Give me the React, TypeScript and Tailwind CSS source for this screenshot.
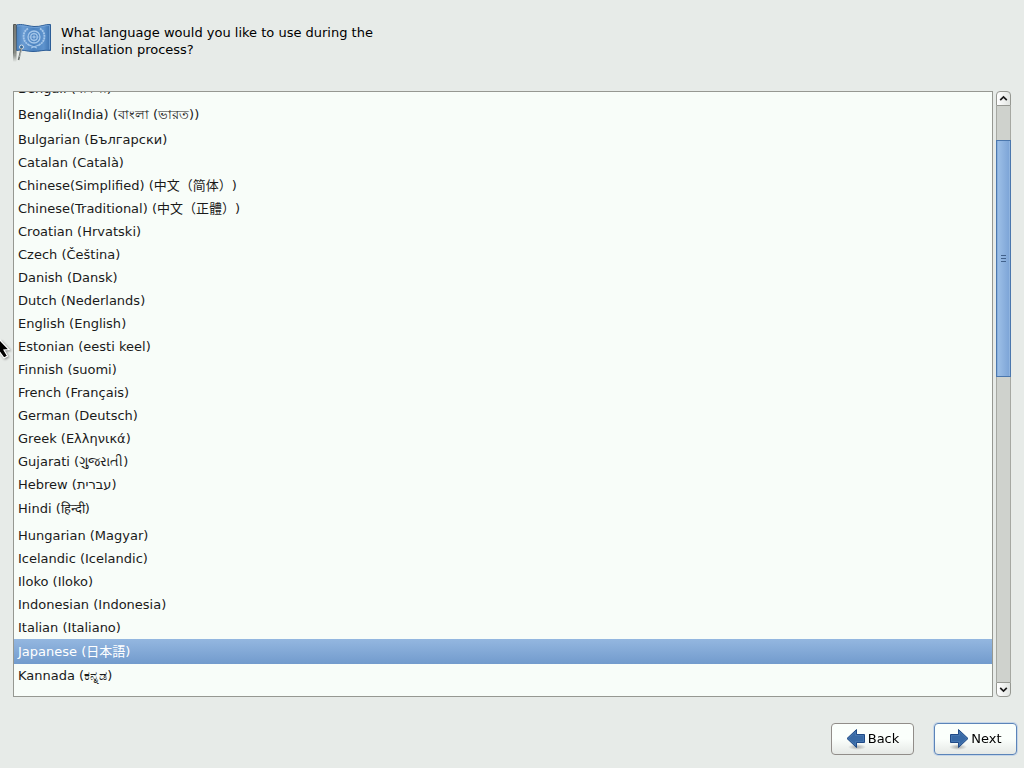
import { useLayoutEffect, useRef, useState } from "react";

type Language = { name: string; native: string; row?: string };

const languages: Language[] = [
  { name: "Bengali", native: "বাংলা", row: "h-[27px] pt-[3px]" },
  { name: "Bengali(India)", native: "বাংলা (ভারত)", row: "h-[27px]" },
  { name: "Bulgarian", native: "Български" },
  { name: "Catalan", native: "Català" },
  { name: "Chinese(Simplified)", native: "中文（简体）" },
  { name: "Chinese(Traditional)", native: "中文（正體）" },
  { name: "Croatian", native: "Hrvatski" },
  { name: "Czech", native: "Čeština" },
  { name: "Danish", native: "Dansk" },
  { name: "Dutch", native: "Nederlands" },
  { name: "English", native: "English" },
  { name: "Estonian", native: "eesti keel" },
  { name: "Finnish", native: "suomi" },
  { name: "French", native: "Français" },
  { name: "German", native: "Deutsch" },
  { name: "Greek", native: "Ελληνικά" },
  { name: "Gujarati", native: "ગુજરાતી" },
  { name: "Hebrew", native: "עברית", row: "h-6" },
  { name: "Hindi", native: "हिन्दी", row: "h-[27px] pb-[3px]" },
  { name: "Hungarian", native: "Magyar" },
  { name: "Icelandic", native: "Icelandic" },
  { name: "Iloko", native: "Iloko" },
  { name: "Indonesian", native: "Indonesia" },
  { name: "Italian", native: "Italiano" },
  { name: "Japanese", native: "日本語", row: "h-[25px]" },
  { name: "Kannada", native: "ಕನ್ನಡ", row: "h-8 pb-2" },
];

function FlagIcon() {
  return (
    <svg width="40" height="40" viewBox="0 0 40 40" aria-hidden="true" className="shrink-0">
      <defs>
        <linearGradient id="flag" x1="0" y1="0" x2="1" y2="0">
          <stop offset="0" stopColor="#4a80bb" />
          <stop offset=".2" stopColor="#6a9cd3" />
          <stop offset=".5" stopColor="#4c83c0" />
          <stop offset=".8" stopColor="#5e93cd" />
          <stop offset="1" stopColor="#3c72b0" />
        </linearGradient>
        <linearGradient id="pole" x1="0" y1="0" x2="0" y2="1">
          <stop offset="0" stopColor="#555753" />
          <stop offset=".75" stopColor="#70746f" />
          <stop offset="1" stopColor="#70746f" stopOpacity="0" />
        </linearGradient>
      </defs>
      <path d="M4.500 3C10 1.500 15 4 22 4.500S33 2 38.500 2.500V28.500C32 27.500 28 29.500 21 29.500S10 27 4.500 28.500Z" fill="url(#flag)" stroke="#2c5d97" />
      <path d="M5 4C10 3 15 5 22 5.500S33 3 37.500 3.500V27.500" fill="none" stroke="#7eabdc" strokeWidth=".7" />
      <g fill="none" stroke="#a5c7ea">
        <circle cx="22" cy="15" r="6" strokeWidth="1.300" />
        <circle cx="22" cy="15" r="3.300" strokeWidth="1.300" />
        <circle cx="22" cy="15" r="1" />
        <path d="M22 9v12M16 15h12" strokeWidth=".5" />
        <path d="M16 6.500C10 10 9.500 20 18 23.500M28 6.500C34 10 34.500 20 26 23.500" strokeWidth="1.800" strokeDasharray="2 .6" />
        <path d="M17 23l8 3M27 23l-8 3" strokeWidth="1.200" />
      </g>
      <rect x="1" y="2" width="3.500" height="38" rx="1" fill="url(#pole)" />
      <path d="M3 3v30" stroke="#a9aca5" strokeWidth=".8" />
      <circle cx="9.500" cy="25" r="2" fill="#376b9f" stroke="#d6e0e8" />
      <path d="M9.500 26L6.500 38" stroke="#686d69" strokeWidth="1.500" />
      <path d="M10 26L7.500 35" stroke="#e8edef" strokeWidth=".5" />
    </svg>
  );
}

function ArrowIcon({ direction }: { direction: "left" | "right" }) {
  return (
    <svg width="20" height="22" viewBox="0 0 20 22" aria-hidden="true" className={direction === "right" ? "shrink-0 -scale-x-100" : "shrink-0"}>
      <defs>
        <radialGradient id={`shadow-${direction}`}>
          <stop offset="0" stopColor="#000" stopOpacity=".3" />
          <stop offset="1" stopColor="#000" stopOpacity="0" />
        </radialGradient>
      </defs>
      <ellipse cx="11" cy="19" rx="9" ry="3" fill={`url(#shadow-${direction})`} />
      <path d="M1 10.500L10.500 1.500V6.500H18.500V14.500H10.500V19.500Z" fill="#3869a5" stroke="#204a87" strokeLinejoin="round" />
      <path d="M2.500 10.500L9.500 3.800V7.500H17.500V13.500H9.500V17.200Z" fill="none" stroke="#4d7eb5" strokeWidth=".6" />
    </svg>
  );
}

function Chevron({ up = false }: { up?: boolean }) {
  return (
    <svg width="9" height="7" viewBox="0 0 9 7" aria-hidden="true" className={up ? "shrink-0" : "shrink-0 rotate-180"}>
      <path d="M1.200 5.200L4.500 2L7.800 5.200" fill="none" stroke="#1b1b1b" strokeWidth="1.700" />
    </svg>
  );
}

function Pointer() {
  return (
    <svg width="12" height="24" viewBox="0 0 12 24" aria-hidden="true" className="pointer-events-none absolute left-0 top-[336px] drop-shadow-[1px_1px_1px_#0006]">
      <path d="M-4 0L9 13.500L4 14L7.500 20L4 22L0 16.500L-4 19Z" fill="#000" stroke="#fff" strokeWidth="1.200" />
    </svg>
  );
}

export default function App() {
  const [selected, setSelected] = useState("Japanese");
  const list = useRef<HTMLUListElement>(null);

  useLayoutEffect(() => {
    if (list.current) list.current.scrollTop = 18;
  }, []);

  const scroll = (amount: number) => list.current?.scrollBy({ top: amount });

  return (
    <div className="relative flex h-screen flex-col overflow-hidden bg-[#e7ebe8] font-['DejaVu_Sans','Noto_Sans_CJK_JP',sans-serif] text-[13px] text-black">
      <header className="flex h-[91px] shrink-0 items-start px-3 pt-[22px]">
        <FlagIcon />
        <h1 className="ml-[9px] mt-[2px] max-w-[340px] leading-[17px]">
          What language would you like to use during the installation process?
        </h1>
      </header>

      <main className="flex min-h-0 flex-1 gap-[3px] px-[13px]">
        <ul
          ref={list}
          aria-label="Installation language"
          className="min-w-0 flex-1 overflow-y-auto border border-[#969892] bg-[#f8fdf9] [scrollbar-width:none]"
        >
          {languages.map(({ name, native, row = "h-[23px]" }) => (
            <li key={name}>
              <button
                type="button"
                aria-pressed={selected === name}
                onClick={() => setSelected(name)}
                className={`flex w-full items-center whitespace-pre px-1 text-left leading-[20px] ${row} ${
                  selected === name ? "bg-linear-to-b from-[#94b7e0] to-[#729bcd] text-white" : "text-[#1a1a1a]"
                }`}
              >
                {name} (<bdi>{native}</bdi>)
              </button>
            </li>
          ))}
        </ul>

        <div className="flex w-[15px] shrink-0 flex-col">
          <button
            type="button"
            aria-label="Scroll up"
            onClick={() => scroll(-23)}
            className="flex h-[15px] shrink-0 items-center justify-center rounded-t-[4px] border border-[#969892] bg-linear-to-r from-white to-[#e2e5e2]"
          >
            <Chevron up />
          </button>
          <div className="flex min-h-0 flex-1 flex-col border-x border-[#a6a8a2] bg-[#cfd2cd]">
            <div className="grow-[34] basis-0" />
            <div className="-mx-px flex grow-[236] basis-0 flex-col items-center justify-center gap-[2px] border border-[#4b77ad] bg-linear-to-r from-[#9fc1e8] to-[#7ba3d6] shadow-[inset_1px_0_#88afdd,inset_-1px_0_#90b4df]">
              <span className="h-px w-[5px] bg-[#41618b]" />
              <span className="h-px w-[5px] bg-[#41618b]" />
              <span className="h-px w-[5px] bg-[#41618b]" />
            </div>
            <div className="grow-[306] basis-0" />
          </div>
          <button
            type="button"
            aria-label="Scroll down"
            onClick={() => scroll(23)}
            className="flex h-[15px] shrink-0 items-center justify-center rounded-b-[4px] border border-[#969892] bg-linear-to-r from-white to-[#e2e5e2]"
          >
            <Chevron />
          </button>
        </div>
      </main>

      <footer className="flex h-[71px] shrink-0 justify-end gap-5 pr-[7px] pt-[26px]">
        <button
          type="button"
          className="flex h-8 w-[83px] items-center justify-center gap-[2px] rounded-[4px] border border-[#918d89] bg-linear-to-b from-[#fbfffc] from-50% to-[#e5e8e5]"
        >
          <ArrowIcon direction="left" />
          Back
        </button>
        <button
          type="button"
          className="flex h-8 w-[83px] items-center justify-center gap-[2px] rounded-[4px] border border-[#5b84b9] bg-linear-to-b from-[#fbfffc] from-50% to-[#e5e8e5] shadow-[0_0_0_1px_#c5d5e7]"
        >
          <ArrowIcon direction="right" />
          Next
        </button>
      </footer>

      <Pointer />
    </div>
  );
}
